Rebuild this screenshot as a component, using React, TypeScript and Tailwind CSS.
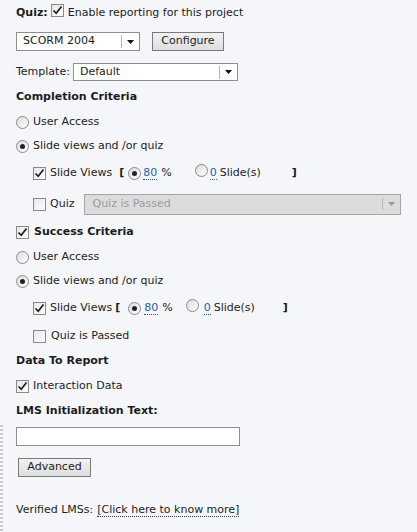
import React from "react";

function Check({ on }: { on?: boolean }) {
  return (
    <span className="inline-flex h-[13px] w-[13px] shrink-0 items-center justify-center border border-[#8a8a8a] bg-gradient-to-br from-[#e6e6e6] to-white">
      {on && (
        <svg width="11" height="11" viewBox="0 0 11 11">
          <path d="M1.5 5.5 L4.2 8.3 L9.5 1.5" fill="none" stroke="#1e1e1e" strokeWidth="1.7" />
        </svg>
      )}
    </span>
  );
}

function Radio({ on }: { on?: boolean }) {
  return (
    <span className="inline-flex h-[13px] w-[13px] shrink-0 items-center justify-center rounded-full border border-[#8a8a8a] bg-gradient-to-br from-[#dcdcdc] to-white">
      {on && <span className="h-[5px] w-[5px] rounded-full bg-[#222]" />}
    </span>
  );
}

function Arrow({ gray }: { gray?: boolean }) {
  return (
    <svg width="7" height="4" viewBox="0 0 7 4">
      <path d="M0 0 H7 L3.5 4 Z" fill={gray ? "#9a9a9a" : "#111"} />
    </svg>
  );
}

function Select({ label, className }: { label: string; className: string }) {
  return (
    <div className={`flex items-center border border-[#8f8f8f] bg-white ${className}`}>
      <span className="flex-1 pl-[6px]">{label}</span>
      <span className="h-[13px] w-px bg-[#b5b5b5]" />
      <span className="flex w-[17px] justify-center">
        <Arrow />
      </span>
    </div>
  );
}

function Num({ v }: { v: string }) {
  return <span className="border-b border-dotted border-[#1f5fb0] leading-[12px] text-[#1f5fb0]">{v}</span>;
}

const Row = ({ className = "", children }: { className?: string; children: React.ReactNode }) => (
  <div className={`flex h-6 items-center ${className}`}>{children}</div>
);

export default function App() {
  return (
    <div className="relative h-[532px] w-[417px] overflow-hidden bg-[#f5f6fa] pl-4 pt-px font-['DejaVu_Sans',sans-serif] text-[11px] text-[#1c1c1c]">
      <div className="absolute left-0 top-[425px] h-[107px] w-[3px] bg-[repeating-linear-gradient(to_bottom,#c9c9c9_0px,#c9c9c9_2px,#ffffff_2px,#ffffff_4px)]" />

      <Row>
        <span className="font-bold">Quiz:</span>
        <span className="ml-[3px]"><Check on /></span>
        <span className="ml-[4px]">Enable reporting for this project</span>
      </Row>

      <div className="mt-[7px] flex items-center">
        <Select label="SCORM 2004" className="h-[19px] w-[124px]" />
        <button className="ml-3 h-[19px] w-[72px] border border-[#7a7a7a] bg-gradient-to-b from-[#f2f2f2] to-[#dedede] text-[11px]">
          Configure
        </button>
      </div>

      <div className="mt-3 flex h-[18px] items-center">
        <span>Template:</span>
        <Select label="Default" className="ml-[3px] h-[18px] w-[165px]" />
      </div>

      <Row className="mt-1">
        <span className="font-bold">Completion Criteria</span>
      </Row>
      <Row className="mt-px">
        <Radio />
        <span className="ml-[4px]">User Access</span>
      </Row>
      <Row>
        <Radio on />
        <span className="ml-[4px]">Slide views and /or quiz</span>
      </Row>
      <Row className="mt-[3px] pl-[17px]">
        <Check on />
        <span className="ml-[4px]">Slide Views</span>
        <span className="ml-[7px] font-bold">[</span>
        <span className="ml-[4px]"><Radio on /></span>
        <span className="ml-[2px]"><Num v="80" /></span>
        <span className="ml-[4px]">%</span>
        <span className="ml-[23px]"><Radio /></span>
        <span className="ml-[2px]"><Num v="0" /></span>
        <span className="ml-[3px]">Slide(s)</span>
        <span className="ml-[31px] font-bold">]</span>
      </Row>
      <Row className="mt-[7px] pl-[17px]">
        <Check />
        <span className="ml-[4px]">Quiz</span>
        <div className="ml-[10px] flex h-[21px] w-[317px] items-center border border-[#a6a6a6] bg-[#dcdcdc] text-[#9b9b9b]">
          <span className="flex-1 pl-[7px]">Quiz is Passed</span>
          <span className="h-[12px] w-px bg-[#b8b8b8]" />
          <span className="flex w-[17px] justify-center">
            <Arrow gray />
          </span>
        </div>
      </Row>

      <Row className="mt-1">
        <Check on />
        <span className="ml-[5px] font-bold">Success Criteria</span>
      </Row>
      <Row className="mt-px">
        <Radio />
        <span className="ml-[4px]">User Access</span>
      </Row>
      <Row>
        <Radio on />
        <span className="ml-[4px]">Slide views and /or quiz</span>
      </Row>
      <Row className="mt-[3px] pl-[17px]">
        <Check on />
        <span className="ml-[4px]">Slide Views</span>
        <span className="ml-[3px] font-bold">[</span>
        <span className="ml-[8px]"><Radio on /></span>
        <span className="ml-[3px]"><Num v="80" /></span>
        <span className="ml-[4px]">%</span>
        <span className="ml-[13px]"><Radio /></span>
        <span className="ml-[5px]"><Num v="0" /></span>
        <span className="ml-[3px]">Slide(s)</span>
        <span className="ml-[28px] font-bold">]</span>
      </Row>
      <Row className="mt-1 pl-[17px]">
        <Check />
        <span className="ml-[5px]">Quiz is Passed</span>
      </Row>

      <Row className="mt-px">
        <span className="font-bold">Data To Report</span>
      </Row>
      <Row className="mt-px">
        <Check on />
        <span className="ml-[4px]">Interaction Data</span>
      </Row>
      <Row className="mt-px">
        <span className="font-bold">LMS Initialization Text:</span>
      </Row>
      <div className="mt-1 h-[19px] w-[224px] border border-[#8f8f8f] bg-white" />
      <button className="ml-[2px] mt-3 h-[19px] w-[73px] border border-[#7a7a7a] bg-gradient-to-b from-[#f2f2f2] to-[#dedede] text-[11px]">
        Advanced
      </button>
      <Row className="mt-[21px]">
        <span>Verified LMSs:</span>
        <span className="ml-[4px] border-b border-dotted border-[#333] leading-[13px]">[Click here to know more]</span>
      </Row>
    </div>
  );
}
